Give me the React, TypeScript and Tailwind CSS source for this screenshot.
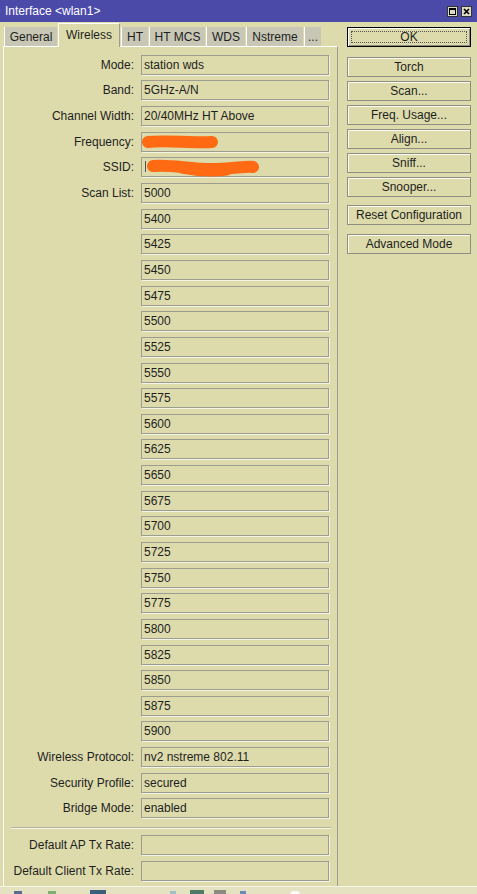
import React from "react";

const scanList = [
  "5000", "5400", "5425", "5450", "5475", "5500", "5525", "5550", "5575", "5600", "5625",
  "5650", "5675", "5700", "5725", "5750", "5775", "5800", "5825", "5850", "5875", "5900",
];

const tabs = [
  { name: "General", w: "w-[53px]" },
  { name: "Wireless", w: "w-[62px]", active: true },
  { name: "HT", w: "w-[27px]" },
  { name: "HT MCS", w: "w-[56px]" },
  { name: "WDS", w: "w-[39px]" },
  { name: "Nstreme", w: "w-[57px]" },
  { name: "...", w: "w-[17px]" },
];

function Field({ label, value, h = "h-[25.65px]", children }: { label?: string; value?: string; h?: string; children?: React.ReactNode }) {
  return (
    <div className={`flex items-center ${h}`}>
      <div className="w-[128px] pr-[1px] text-right text-[#1e1e1e]">{label ? `${label}:` : ""}</div>
      <div className="relative ml-[6px] flex h-[20px] w-[188px] items-center border border-[#9d9c90] pl-[2px] text-[#1e1e1e] shadow-[1px_1px_0_#f4f4e4]">
        {value}
        {children}
      </div>
    </div>
  );
}

function Button({ label, ok }: { label: string; ok?: boolean }) {
  if (ok) {
    return (
      <div className="relative flex h-[20px] w-[124px] items-center justify-center border border-black text-[#1e1e1e] shadow-[inset_1px_1px_0_#fff,inset_-1px_-1px_0_#8e8d84]">
        <span className="absolute inset-[3px] border border-dotted border-[#555]" />
        {label}
      </div>
    );
  }
  return (
    <div className="flex h-[20px] w-[124px] items-center justify-center border border-[#8e8d84] text-[#1e1e1e] shadow-[inset_1px_1px_0_#fbfbf0]">
      {label}
    </div>
  );
}

export default function App() {
  return (
    <div className="flex h-[894px] w-[477px] flex-col overflow-hidden bg-[#dddbac] font-['Liberation_Sans',Arial,sans-serif] text-[12px] leading-none">
      {/* title bar */}
      <div className="flex h-[22px] shrink-0 items-center justify-between bg-[#4c4aa9] pl-[5px] pr-[5px] text-white">
        <span className="text-[12px]">Interface &lt;wlan1&gt;</span>
        <div className="flex gap-[3px]">
          <div className="flex h-[11px] w-[11px] items-center justify-center border border-[#333] bg-[#dcdcc4]">
            <span className="h-[7px] w-[7px] border border-t-2 border-black" />
          </div>
          <div className="flex h-[11px] w-[11px] items-center justify-center border border-[#333] bg-[#dcdcc4]">
            <svg width="7" height="7" viewBox="0 0 7 7">
              <path d="M1 1L6 6M6 1L1 6" stroke="#000" strokeWidth="1.7" />
            </svg>
          </div>
        </div>
      </div>

      <div className="flex flex-1">
        {/* left: tabs + panel */}
        <div className="ml-[3px] flex w-[335px] flex-col">
          <div className="flex h-[24px] items-end gap-[1px] pl-[1px]">
            {tabs.map((t) =>
              t.active ? (
                <div
                  key={t.name}
                  className={`${t.w} relative z-10 -mb-[1px] flex h-[24px] items-center justify-center border-l border-t border-r border-l-white border-t-white border-r-[#9d9c90] bg-[#dddbac] pb-[2px] text-[#1e1e1e]`}
                >
                  {t.name}
                </div>
              ) : (
                <div
                  key={t.name}
                  className={`${t.w} flex h-[19px] items-center justify-center border-l border-white bg-[#c8c7b5] pt-[1px] text-[#1e1e1e]`}
                >
                  {t.name}
                </div>
              )
            )}
          </div>

          <div className="flex flex-1 flex-col border-l border-t border-r border-l-white border-t-white border-r-[#9d9c90] pl-[3px] pt-[5px]">
            <Field label="Mode" value="station wds" />
            <Field label="Band" value="5GHz-A/N" />
            <Field label="Channel Width" value="20/40MHz HT Above" />
            <Field label="Frequency">
              <svg className="absolute left-0 top-0" width="188" height="20" viewBox="0 0 188 20">
                <path d="M6 9 C22 7 48 10 70 9" stroke="#ff6a12" strokeWidth="12" strokeLinecap="round" fill="none" />
              </svg>
            </Field>
            <Field label="SSID" value="">
              <span className="absolute left-[3px] top-[3px] h-[11px] w-[1px] bg-[#555]" />
              <svg className="absolute left-0 top-0" width="188" height="20" viewBox="0 0 188 20">
                <path d="M11 8 C30 6 50 12 75 11 C95 10 106 8 111 9" stroke="#ff6a12" strokeWidth="12" strokeLinecap="round" fill="none" />
                <path d="M40 10 C55 13 70 14 85 12" stroke="#ff6a12" strokeWidth="11" strokeLinecap="round" fill="none" />
              </svg>
            </Field>
            {scanList.map((v, i) => (
              <Field key={v} label={i === 0 ? "Scan List" : undefined} value={v} />
            ))}
            <Field label="Wireless Protocol" value="nv2 nstreme 802.11" />
            <Field label="Security Profile" value="secured" />
            <Field label="Bridge Mode" value="enabled" />

            <div className="mb-[3px] ml-[4px] mt-[6px] h-[2px] w-[320px] border-t border-b border-t-[#b4b39c] border-b-[#f4f4e4]" />

            <Field label="Default AP Tx Rate" h="h-[26px]" />
            <Field label="Default Client Tx Rate" h="h-[26px]" />
          </div>
        </div>

        {/* right: buttons */}
        <div className="ml-[9px] flex flex-col pt-[5px]">
          <Button label="OK" ok />
          <div className="mt-[10px] flex flex-col gap-[4px]">
            <Button label="Torch" />
            <Button label="Scan..." />
            <Button label="Freq. Usage..." />
            <Button label="Align..." />
            <Button label="Sniff..." />
            <Button label="Snooper..." />
          </div>
          <div className="mt-[8px]">
            <Button label="Reset Configuration" />
          </div>
          <div className="mt-[9px]">
            <Button label="Advanced Mode" />
          </div>
        </div>
      </div>

      {/* bottom edge / cut-off taskbar */}
      <div className="relative h-[8px] shrink-0 border-t border-[#f6f6e6] bg-[#e4e2c0]">
        <span className="absolute left-[14px] top-[4px] h-[4px] w-[8px] bg-[#5a6a90]" />
        <span className="absolute left-[48px] top-[4px] h-[4px] w-[8px] bg-[#7fb070]" />
        <span className="absolute left-[90px] top-[3px] h-[5px] w-[16px] bg-[#3b5f7a]" />
        <span className="absolute left-[170px] top-[4px] h-[4px] w-[6px] bg-[#9fc0c8]" />
        <span className="absolute left-[190px] top-[3px] h-[5px] w-[14px] bg-[#4f7a68]" />
        <span className="absolute left-[214px] top-[3px] h-[5px] w-[12px] bg-[#8a8a84]" />
        <span className="absolute left-[240px] top-[4px] h-[4px] w-[6px] bg-[#6a8ab8]" />
        <span className="absolute left-[290px] top-[4px] h-[4px] w-[10px] rounded-t-full bg-[#fafafa]" />
      </div>
    </div>
  );
}
